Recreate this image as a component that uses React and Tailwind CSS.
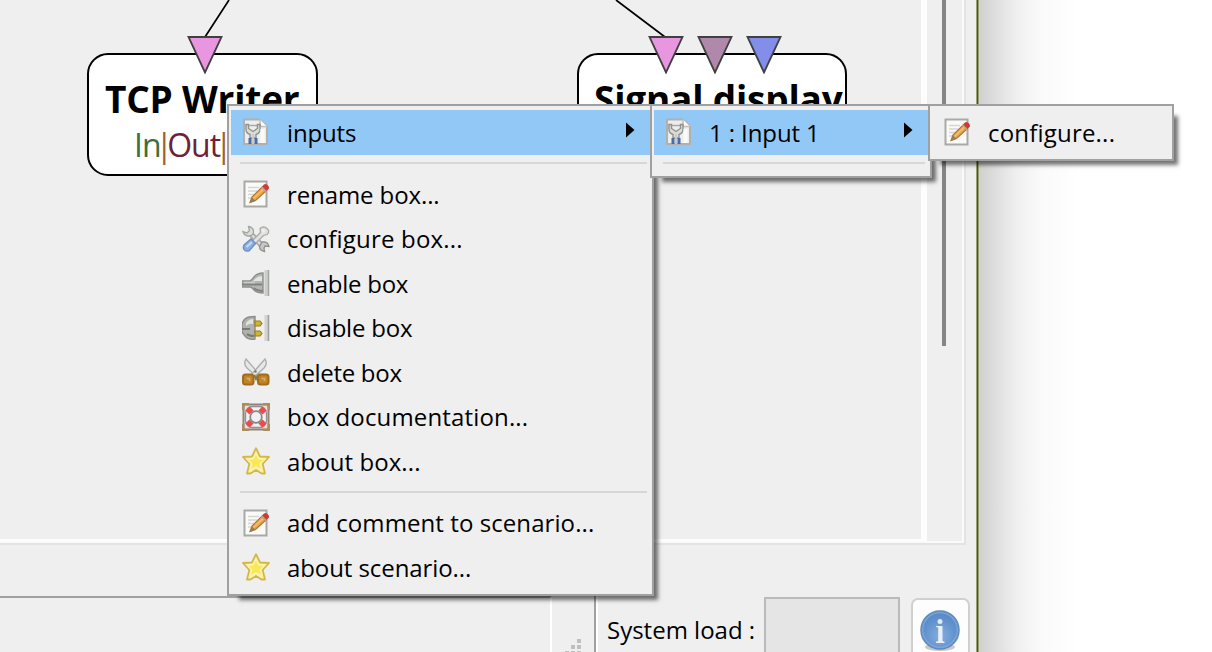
import React from "react";

function EditIcon() {
  return (
    <svg width="28" height="28" viewBox="0 0 28 28" className="block shrink-0">
      <rect x="2.500" y="1.500" width="22" height="25" fill="#fafaf9" stroke="#a9a9a5" strokeWidth="2" />
      <path d="M6 7.500h11M6 11h9M6 14.500h6M6 18h5" stroke="#d6d6d4" strokeWidth="1.600" />
      <path d="M8 22.500l2-5.500L20 7l4 4L13.500 20.500z" fill="#eba64c" stroke="#b5732a" strokeWidth="1.200" />
      <path d="M11.500 18.500L21.500 9" stroke="#f5c27a" strokeWidth="1.200" />
      <path d="M8 23l1.800-5.500 3.800 3.200z" fill="#8e8064" />
      <path d="M20 6.500l2-2q1.500-1 3.500.5t1.500 3.500L24.500 11z" fill="#cf3a36" />
      <path d="M19.500 7l4.500 4.500" stroke="#b9a79c" strokeWidth="1.500" />
    </svg>
  );
}

function SettingsPageIcon() {
  return (
    <svg width="28" height="28" viewBox="0 0 28 28" className="block shrink-0">
      <path d="M2 1.500h16l7 7v17.500H2z" fill="#ededeb" stroke="#b0b1ae" strokeWidth="2" />
      <path d="M18 1.500v7h7" fill="#fbfbfb" stroke="#c0c1be" strokeWidth="1.500" />
      <path d="M3.500 7.500h15" stroke="#a6a8a5" strokeWidth="1.400" />
      <path d="M4 6.500v5q0 3.500 4 5V20h6v-3.500q4-1.500 4-5v-5l-2.500 0v4l-4.500 3-4.500-3v-4z" fill="#dcdcd9" stroke="#90928e" strokeWidth="1.400" />
      <path d="M8 20v6M14 20v6" stroke="#4a6ca6" strokeWidth="3" />
      <path d="M11 16v10" stroke="#c6cbd2" strokeWidth="2" />
      <path d="M20.500 11v14" stroke="#fafafa" strokeWidth="4" />
    </svg>
  );
}

function ToolsIcon() {
  return (
    <svg width="28" height="28" viewBox="0 0 28 28" className="block shrink-0">
      <path d="M7 7L22 23" stroke="#a6a8a4" strokeWidth="5.500" />
      <path d="M7 7L22 23" stroke="#dcdcda" strokeWidth="2.500" />
      <path d="M6.500 1.500q5 1 5 5t-4 4.500Q2 11 1 6.500L5 8l2.500-2.500z" fill="#dededb" stroke="#a3a5a1" strokeWidth="1.300" />
      <path d="M20 17q6-1 7 4.500l-4-.5-1 2 .5 3.500q-5-1-5-5z" fill="#c8c9c6" stroke="#8f918d" strokeWidth="1.300" />
      <path d="M18 3.500q3.500-3 7 0t0 6l-3.500 1-8 8-3-3 8-8z" fill="#e1e2e0" stroke="#a9aba7" strokeWidth="1.300" />
      <circle cx="21.500" cy="6" r="1.800" fill="#efefef" />
      <path d="M9 14l4.500 4.500-6 7q-3 1.500-5-.5t-.5-5z" fill="#8bb0df" stroke="#6c90c2" strokeWidth="1.400" />
      <path d="M4.500 22L10 17" stroke="#c4d8f2" strokeWidth="2" />
    </svg>
  );
}

function PluggedIcon() {
  return (
    <svg width="28" height="28" viewBox="0 0 28 28" className="block shrink-0">
      <path d="M0 12h8q2-1 4-4 3-4 9-4v20q-6 0-9-3-2-3-4-3H0z" fill="#b3b6b1" stroke="#8d908c" strokeWidth="1.400" />
      <path d="M13 10q3-3 7-3v5h-9z" fill="#e3e4e1" />
      <path d="M0 15.500h20M12 19q3 3 9 3" stroke="#80837f" strokeWidth="1.800" fill="none" />
      <path d="M2 13.500h11" stroke="#ccceca" strokeWidth="1.500" />
      <rect x="22.500" y="1" width="4.500" height="26" fill="#cdcfca" />
      <path d="M26.500 1v26" stroke="#a4a7a2" strokeWidth="1.500" />
    </svg>
  );
}

function UnpluggedIcon() {
  return (
    <svg width="28" height="28" viewBox="0 0 28 28" className="block shrink-0">
      <path d="M0 10q2-6 7-7l6-.500V25q-7 1-10-3l-3-4z" fill="#afb2ad" stroke="#8b8d89" strokeWidth="1.400" />
      <path d="M4 9q3-4 7-4v5q-4-1-7 2z" fill="#e1e3df" />
      <path d="M0 15h8M5 20q2 2 7 2" stroke="#777a75" strokeWidth="2" fill="none" />
      <path d="M13 7h5l2 2.500-2 2.500h-5zM13 17h5l2 2.500-2 2.500h-5z" fill="#cfb42e" stroke="#9a8018" strokeWidth="1.200" />
      <rect x="22.500" y="1" width="4.500" height="26" fill="#d2d4cf" />
      <path d="M26.500 1v26" stroke="#9c9f9a" strokeWidth="1.500" />
    </svg>
  );
}

function ScissorsIcon() {
  return (
    <svg width="28" height="28" viewBox="0 0 28 28" className="block shrink-0">
      <path d="M4 1q-3 5 1 9l10 9 2-3z" fill="#e8e9e7" stroke="#adafab" strokeWidth="1.400" />
      <path d="M23 1q3 5-1 9L12 19l-2-3z" fill="#e8e9e7" stroke="#adafab" strokeWidth="1.400" />
      <circle cx="13.500" cy="13.500" r="1.200" fill="#777" />
      <rect x="1" y="16.500" width="10.500" height="10" rx="2.500" fill="#c08427" stroke="#a06c20" strokeWidth="2" />
      <rect x="16" y="16.500" width="10.500" height="10" rx="2.500" fill="#c08427" stroke="#a06c20" strokeWidth="2" />
      <path d="M4.500 20.500h3v2.500M19.500 20.500h3v2.500" stroke="#dcae60" strokeWidth="1.600" fill="none" />
      <path d="M12 17l2 4 2-4" stroke="#92753f" strokeWidth="2" fill="none" />
    </svg>
  );
}

function LifebuoyIcon() {
  return (
    <svg width="28" height="28" viewBox="0 0 28 28" className="block shrink-0">
      <rect x="1.500" y="1.500" width="25" height="25" rx="2" fill="#e4e0db" stroke="#8f857a" strokeWidth="2" />
      <path d="M1 7V1h6M21 1h6v6M27 21v6h-6M7 27H1v-6" stroke="#b08c5c" strokeWidth="2.600" fill="none" />
      <rect x="3.500" y="3.500" width="21" height="21" rx="7" fill="#f1f1f0" stroke="#96918d" strokeWidth="1.300" />
      <path d="M5.500 5.500l4 4M22.500 5.500l-4 4M22.500 22.500l-4-4M5.500 22.500l4-4" stroke="#ee4a4e" strokeWidth="6" />
      <circle cx="14" cy="14" r="5.800" fill="#f1f1f1" stroke="#888a87" strokeWidth="1.800" />
    </svg>
  );
}

function StarIcon() {
  return (
    <svg width="28" height="28" viewBox="0 0 28 28" className="block shrink-0">
      <path d="M14 1.200l4 8.300 9 .500-6.300 7L23 26.500h-3.500L14 23l-5.500 3.500H5L7.300 17 1 10l9-.500z" fill="#fbf2ac" stroke="#d3b748" strokeWidth="1.800" strokeLinejoin="round" />
      <path d="M14 8l2.200 4.500 4.800.5-3.500 3.500 1 5-4.500-2.500-4.500 2.500 1-5L7 13l4.800-.5z" fill="#f8e436" opacity=".75" />
    </svg>
  );
}

function InfoIcon() {
  return (
    <svg width="42" height="44" viewBox="0 0 42 44" className="block shrink-0">
      <defs>
        <radialGradient id="infoFill" cx="50%" cy="65%" r="60%">
          <stop offset="0" stopColor="#85aee0" />
          <stop offset=".6" stopColor="#6595cf" />
          <stop offset="1" stopColor="#5789c6" />
        </radialGradient>
      </defs>
      <ellipse cx="21" cy="38" rx="15" ry="4" fill="#c9c9c9" />
      <circle cx="21" cy="21" r="19" fill="url(#infoFill)" stroke="#5f8bc0" strokeWidth="1.500" />
      <circle cx="21" cy="21" r="17.300" fill="none" stroke="#7fa7d6" strokeWidth="1.300" />
      <circle cx="21" cy="12.500" r="2.500" fill="#e0e8f2" />
      <path d="M17 17h6.500v15l2 .800V34H17v-1.200l2.200-.800V18.500l-2.200-.500z" fill="#e9eff7" />
    </svg>
  );
}

function MenuItem({ icon: Icon, label, spacing, active, submenu }) {
  return (
    <li className={"flex h-[44.5px] items-center pl-[11px] " + (active ? "bg-[#91c8f6]" : "")}>
      <Icon />
      <span className={"mt-[1px] ml-[17px] flex-1 whitespace-nowrap text-[24px] leading-[44px] " + spacing}>{label}</span>
      {submenu && (
        <svg width="10" height="16" viewBox="0 0 10 16" className="mr-[15px] mb-[5px]">
          <path d="M1 0.500L9.500 8 1 15.500z" fill="#000" />
        </svg>
      )}
    </li>
  );
}

function Separator({ className }) {
  return (
    <li className={"flex items-center pr-[3px] pl-[9px] " + className}>
      <div className="h-[2px] w-full bg-[#d7d7d7]" />
    </li>
  );
}

function Menu({ className, children }) {
  return (
    <div className={"absolute border-2 border-[#a0a0a0] bg-[#efefef] shadow-[8px_8px_4px_-4px_rgba(0,0,0,0.55)] " + className}>
      <ul>{children}</ul>
    </div>
  );
}

function Port({ className }) {
  return (
    <svg width="36" height="38" viewBox="0 0 36 38" className={className}>
      <path d="M1.500 1h33L18 36.500z" stroke="#404040" strokeWidth="1.800" />
    </svg>
  );
}

function Box({ className, title, titleClass, ports, portsClass, children }) {
  return (
    <div className={"absolute rounded-[21px] border-2 border-black bg-white " + className}>
      <div className={"absolute -top-[19px] flex gap-[13px] " + portsClass}>
        {ports.map((fill) => (
          <Port key={fill} className={fill} />
        ))}
      </div>
      <div className={"mt-[21px] whitespace-nowrap font-bold leading-[46px] " + titleClass}>{title}</div>
      {children}
    </div>
  );
}

function Scenario() {
  return (
    <div className="relative h-[545px] w-[966px] shrink-0 border-r-2 border-b-2 border-[#e3e3e3]">
      <div className="flex h-full border-r-2 border-b-2 border-[#fafafa]">
        <div className="relative flex-1 overflow-hidden border-r-[6px] border-b-2 border-[#fdfdfd]">
          <svg width="921" height="60" viewBox="0 0 921 60" className="block" fill="none" stroke="#000" strokeWidth="1.700">
            <path d="M229 0L205 37M616 0L665 37" />
          </svg>
          <Box
            className="top-[53px] left-[87px] h-[123px] w-[231px]"
            title="TCP Writer"
            titleClass="pl-[16px] text-[37px] tracking-[-0.2px]"
            ports={["fill-[#e996e0]"]}
            portsClass="left-[98px]"
          >
            <div className="pl-[45px] text-[32px] leading-[46px] whitespace-nowrap tracking-[-1px]">
              <span className="text-[#3c6f3c]">In</span>
              <span className="-mx-[5px] text-[#a0602c]">|</span>
              <span className="text-[#6d2238]">Out</span>
              <span className="-mx-[5px] text-[#a0602c]">|</span>
            </div>
          </Box>
          <Box
            className="top-[53px] left-[577px] h-[123px] w-[270px]"
            title="Signal display"
            titleClass="pl-[15px] text-[37px] tracking-[-0.2px]"
            ports={["fill-[#e996e0]", "fill-[#b088ab]", "fill-[#828ee9]"]}
            portsClass="left-[69px]"
          />
        </div>
        <div className="w-[35px] pl-[15px]">
          <div className="h-[346px] w-[4px] bg-[#858585]" />
        </div>
      </div>
    </div>
  );
}

function StatusBar() {
  return (
    <div className="mt-[51px] flex h-[56px] shrink-0 overflow-hidden">
      <div className="h-[70px] w-[552px] border-t-2 border-r-2 border-t-[#a0a0a0] border-r-white" />
      <svg width="42" height="56" viewBox="0 0 42 56" fill="#bfbfbf" className="shrink-0">
        <path d="M25 43h4v4h-4zM19 49h4v4h-4zM25 49h4v4h-4zM13 55h4v4h-4zM19 55h4v4h-4zM25 55h4v4h-4z" />
      </svg>
      <div className="h-[70px] w-[4px] border-r-2 border-l-2 border-r-white border-l-[#a0a0a0]" />
      <span className="w-[166px] shrink-0 pl-[9px] text-[24px] leading-[67px] whitespace-nowrap">System load :</span>
      <div className="mt-px h-[70px] w-[136px] border-2 border-[#bababa] bg-[#e5e5e5]" />
      <div className="mt-[2px] ml-[11px] flex h-[70px] w-[59px] justify-center rounded-[7px] border-2 border-[#d0d0d0] bg-[#fdfdfd] pt-[9px] pr-[2px]">
        <InfoIcon />
      </div>
    </div>
  );
}

export default function App() {
  return (
    <div className="relative flex h-[652px] w-[1212px] overflow-hidden bg-white font-['Open_Sans','Noto_Sans',sans-serif] text-black">
      <div className="flex w-[976px] shrink-0 flex-col bg-[#efefef]">
        <Scenario />
        <StatusBar />
      </div>
      <div className="w-[3px] shrink-0 border-x border-[#97a071] bg-[#48551b]" />
      <div className="w-[110px] bg-[linear-gradient(to_right,#d0d0d0_0px,#dfdfdf_18px,#f0f0f0_38px,#fafafa_62px,#ffffff_100px)]" />

      <Menu className="top-[104px] left-[227px] h-[492px] w-[427px] px-[2px] pt-[4px]">
        <MenuItem icon={SettingsPageIcon} label="inputs" spacing="tracking-[-0.15px]" active submenu />
        <Separator className="h-[17.500px]" />
        <MenuItem icon={EditIcon} label="rename box..." spacing="tracking-[-0.1px]" />
        <MenuItem icon={ToolsIcon} label="configure box..." spacing="tracking-[0.2px]" />
        <MenuItem icon={PluggedIcon} label="enable box" spacing="tracking-[-0.25px]" />
        <MenuItem icon={UnpluggedIcon} label="disable box" spacing="tracking-[-0.22px]" />
        <MenuItem icon={ScissorsIcon} label="delete box" spacing="tracking-[-0.3px]" />
        <MenuItem icon={LifebuoyIcon} label="box documentation..." spacing="tracking-[0.15px]" />
        <MenuItem icon={StarIcon} label="about box..." spacing="tracking-[0.08px]" />
        <Separator className="h-[17px]" />
        <MenuItem icon={EditIcon} label="add comment to scenario..." spacing="tracking-[0.08px]" />
        <MenuItem icon={StarIcon} label="about scenario..." spacing="tracking-[-0.08px]" />
      </Menu>

      <Menu className="top-[104px] left-[650px] h-[74px] w-[282px] px-[2px] pt-[4px]">
        <MenuItem icon={SettingsPageIcon} label="1 : Input 1" spacing="-indent-[1px] tracking-[-0.1px]" active submenu />
        <Separator className="h-[17.500px]" />
      </Menu>

      <Menu className="top-[104px] left-[928px] h-[57px] w-[246px] px-[2px] pt-[4px]">
        <MenuItem icon={EditIcon} label="configure..." spacing="tracking-[0.2px]" />
      </Menu>
    </div>
  );
}
